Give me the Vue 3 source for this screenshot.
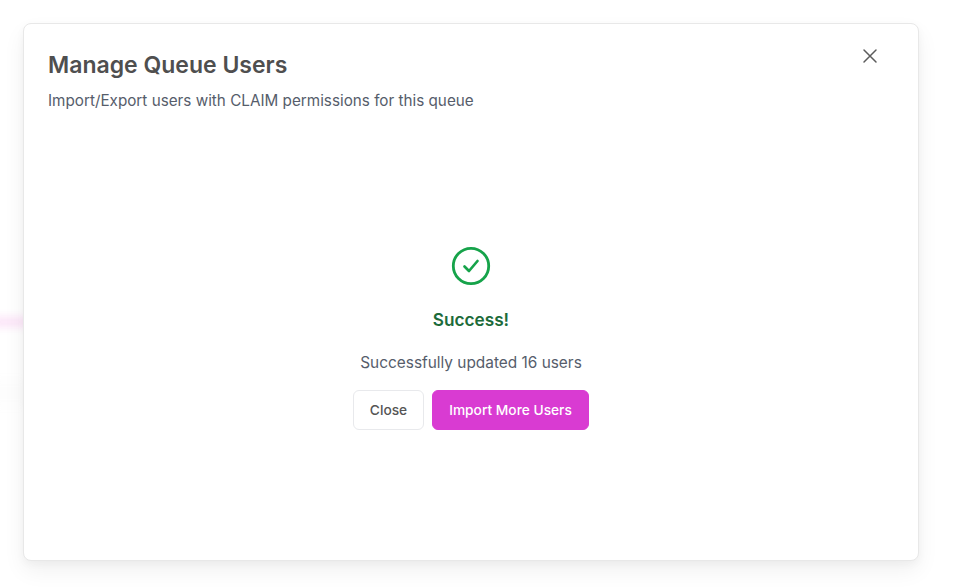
<script setup>
const title = 'Manage Queue Users'
const subtitle = 'Import/Export users with CLAIM permissions for this queue'
</script>

<template>
  <div class="page">
    <div class="backdrop-streak pink"></div>
    <div class="backdrop-streak grey"></div>
    <section class="modal">
      <header class="head">
        <div class="head-text">
          <h1 class="title">{{ title }}</h1>
          <p class="subtitle">{{ subtitle }}</p>
        </div>
        <button class="close-x" aria-label="Close">
          <svg width="24" height="24" viewBox="0 0 24 24" fill="none" stroke="#5c5c5c" stroke-width="1.5" stroke-linecap="round">
            <path d="M6 6l12 12M18 6L6 18" />
          </svg>
        </button>
      </header>
      <div class="body">
        <svg class="check" width="40" height="40" viewBox="0 0 40 40" fill="none" stroke="#16a34a">
          <circle cx="20" cy="20" r="17.7" stroke-width="2.8" />
          <path d="M13.5 20.5l4.5 4.5 8.5-10" stroke-width="2.7" stroke-linecap="round" stroke-linejoin="round" />
        </svg>
        <h2 class="success">Success!</h2>
        <p class="message">Successfully updated 16 users</p>
        <div class="actions">
          <button class="btn secondary">Close</button>
          <button class="btn primary">Import More Users</button>
        </div>
      </div>
    </section>
  </div>
</template>

<style>
html, body { margin: 0; background: #fff; }
</style>

<style scoped>
.page {
  position: relative;
  box-sizing: border-box;
  width: 956px;
  height: 587px;
  padding: 23px 37px 26px 23px;
  overflow: hidden;
  background: #fff;
  font-family: Inter, "Liberation Sans", sans-serif;
}
.backdrop-streak {
  position: absolute;
  filter: blur(5px);
}
.pink {
  left: -10px;
  top: 318px;
  width: 40px;
  height: 8px;
  background: #fbdcf6;
}
.grey {
  left: -10px;
  top: 380px;
  width: 40px;
  height: 26px;
  background: #fdfdfd;
}
.modal {
  position: relative;
  box-sizing: border-box;
  display: flex;
  flex-direction: column;
  width: 896px;
  height: 538px;
  border: 1px solid #e8e8e8;
  border-radius: 8px;
  background: #fff;
  box-shadow: 0 10px 22px rgba(0, 0, 0, 0.06), 0 3px 8px rgba(0, 0, 0, 0.035);
}
.head {
  display: flex;
  justify-content: space-between;
  align-items: flex-start;
  padding: 20px 36px 0 24px;
}
.head-text {
  padding-top: 5px;
}
.title {
  margin: 0;
  font-size: 23px;
  line-height: 32px;
  font-weight: 600;
  color: #4f4f4f;
}
.subtitle {
  margin: 10px 0 0;
  font-size: 15.25px;
  line-height: 20px;
  color: #565d6b;
}
.close-x {
  display: flex;
  padding: 0;
  border: 0;
  background: none;
}
.body {
  display: flex;
  flex-direction: column;
  align-items: center;
  padding-top: 135px;
}
.check {
  display: block;
}
.success {
  margin: 20px 0 0;
  font-size: 17.2px;
  line-height: 28px;
  font-weight: 600;
  color: #1c6b3a;
}
.message {
  margin: 17px 0 0;
  font-size: 15.4px;
  line-height: 24px;
  color: #565d6b;
}
.actions {
  display: flex;
  gap: 8px;
  margin-top: 15px;
}
.btn {
  box-sizing: border-box;
  width: 71px;
  height: 40px;
  padding: 0;
  border-radius: 6px;
  font-family: inherit;
  font-size: 13.75px;
  font-weight: 500;
}
.secondary {
  border: 1px solid #e8e9ec;
  background: #fff;
  color: #555;
}
.primary {
  width: 157px;
  border: 1px solid #d93bd2;
  background: #d93bd2;
  color: #fff;
}
</style>
